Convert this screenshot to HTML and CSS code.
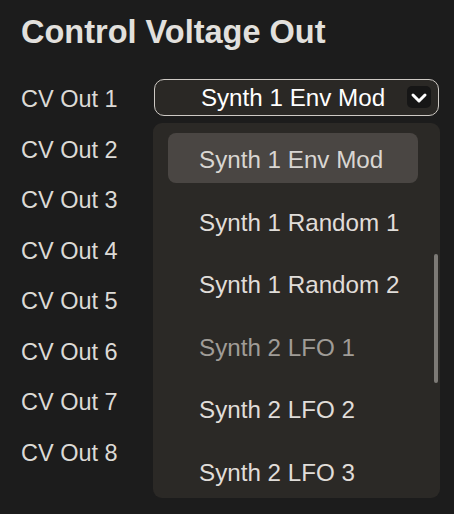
FILE: index.html
```html
<!DOCTYPE html>
<html>
<head>
<meta charset="utf-8">
<link rel="stylesheet" href="styles.css">
</head>
<body>
<div class="panel">
  <h1 class="title">Control Voltage Out</h1>
  <div class="rows">
    <div class="label">CV Out 1</div>
    <div class="select-wrap">
      <div class="select">
        <span class="select-text">Synth 1 Env Mod</span>
        <span class="chev">
          <svg width="24" height="22" viewBox="0 0 24 22"><path d="M6 9 L12 15 L18 9" fill="none" stroke="#ffffff" stroke-width="3" stroke-linecap="round" stroke-linejoin="round"/></svg>
        </span>
      </div>
      <div class="menu">
        <div class="item active">Synth 1 Env Mod</div>
        <div class="item">Synth 1 Random 1</div>
        <div class="item">Synth 1 Random 2</div>
        <div class="item dim">Synth 2 LFO 1</div>
        <div class="item">Synth 2 LFO 2</div>
        <div class="item">Synth 2 LFO 3</div>
        <div class="scrollbar"></div>
      </div>
    </div>
    <div class="label">CV Out 2</div><div></div>
    <div class="label">CV Out 3</div><div></div>
    <div class="label">CV Out 4</div><div></div>
    <div class="label">CV Out 5</div><div></div>
    <div class="label">CV Out 6</div><div></div>
    <div class="label">CV Out 7</div><div></div>
    <div class="label">CV Out 8</div><div></div>
  </div>
</div>
</body>
</html>
```

FILE: styles.css
```css
html, body {
  margin: 0;
  padding: 0;
  background: #1c1c1c;
  height: 100%;
  overflow: hidden;
}
.panel {
  padding: 14px 0 0 21px;
  font-family: "Liberation Sans", Arial, sans-serif;
  color: #dedcd8;
}
.title {
  margin: 0;
  font-size: 32.5px;
  line-height: 36px;
  font-weight: bold;
  color: #e2e0dd;
}
.rows {
  margin-top: 23.7px;
  display: grid;
  grid-template-columns: 133px 285px;
  grid-auto-rows: 50.57px;
  align-items: center;
}
.label {
  font-size: 23.5px;
  line-height: 28px;
  color: #dcdad6;
}
.select-wrap {
  position: relative;
  margin-bottom: 3px;
}
.select {
  box-sizing: border-box;
  height: 37px;
  border: 1px solid #cdc9c4;
  border-radius: 10px;
  background: #2a2825;
  display: grid;
  grid-template-columns: 1fr auto 1fr;
  align-items: center;
  padding-right: 7px;
}
.select-text {
  grid-column: 2;
  font-size: 24.2px;
  line-height: 35px;
  color: #ffffff;
  white-space: nowrap;
}
.chev {
  grid-column: 3;
  justify-self: end;
  width: 24px;
  height: 22px;
  background: #161616;
  border-radius: 5px;
  display: flex;
}
.menu {
  position: absolute;
  left: -1px;
  top: calc(100% + 7px);
  width: 287px;
  height: 375px;
  box-sizing: border-box;
  background: #2b2926;
  border-radius: 9px;
  padding: 10px 22px 0 15px;
  display: grid;
  grid-auto-rows: 50px;
  row-gap: 12.6px;
  align-content: start;
  overflow: hidden;
  z-index: 2;
}
.item {
  box-sizing: border-box;
  height: 50px;
  padding: 4px 0 0 31px;
  line-height: 46px;
  font-size: 24.2px;
  color: #e0ddd9;
  border-radius: 8px;
  white-space: nowrap;
}
.item.active {
  background: #4a4643;
  color: #d9d6d2;
}
.item.dim {
  color: #a09c97;
}
.scrollbar {
  position: absolute;
  left: 281px;
  top: 131px;
  width: 4px;
  height: 129px;
  border-radius: 2px;
  background: #7d7a76;
}
```
